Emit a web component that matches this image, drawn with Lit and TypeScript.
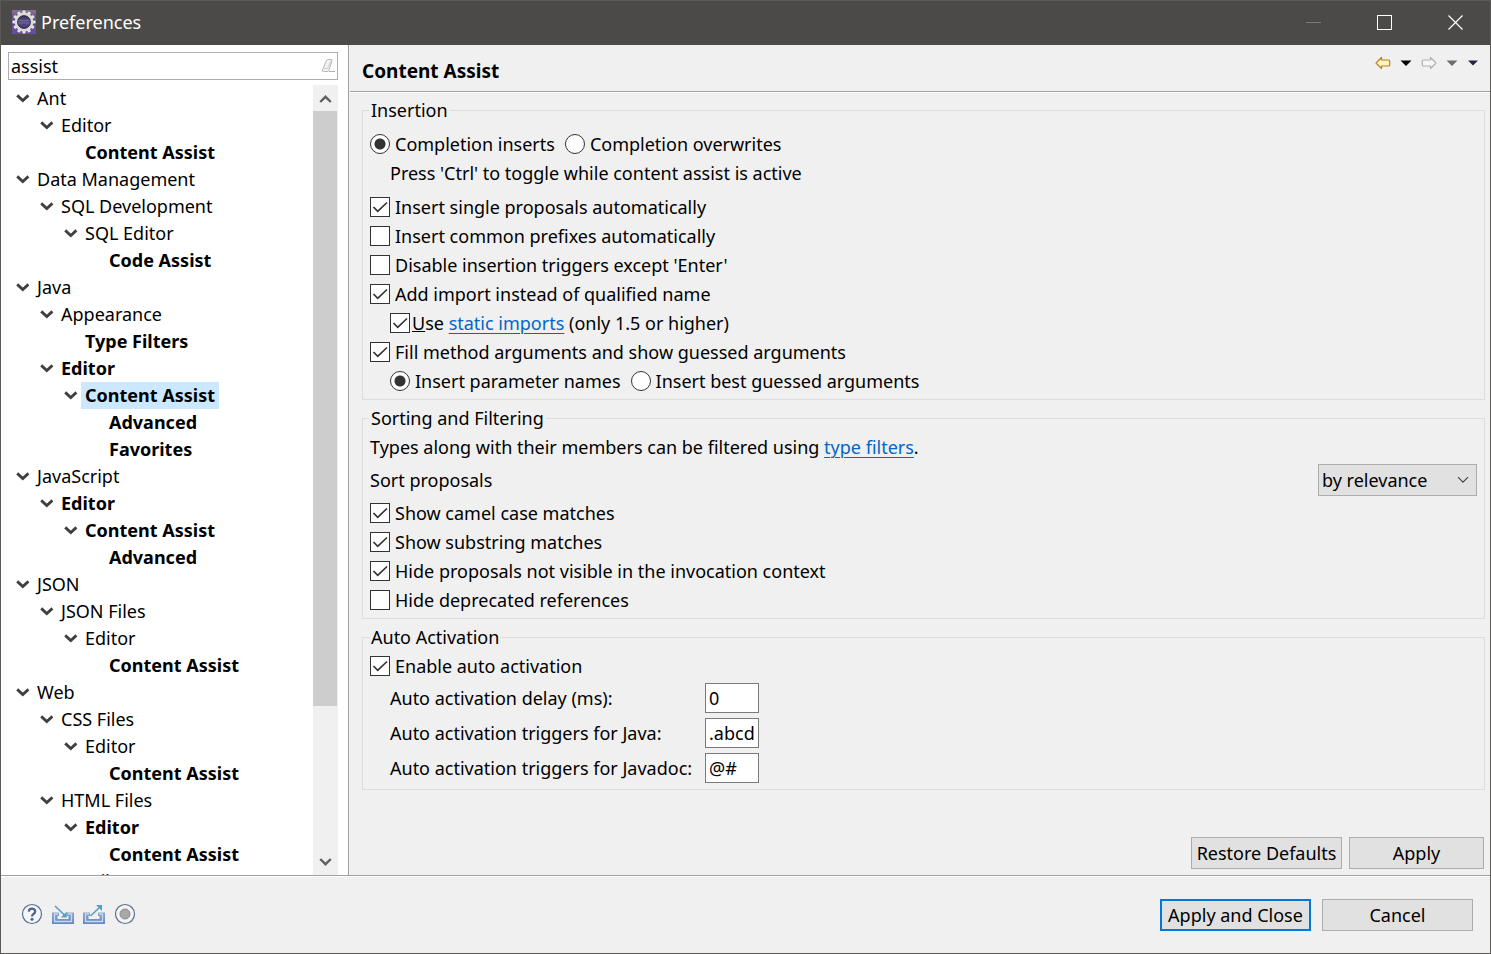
import { LitElement, html, css, svg, nothing } from "lit";
import { customElement, property } from "lit/decorators.js";

interface TreeNode {
  label: string;
  bold?: boolean;
  selected?: boolean;
  children?: TreeNode[];
}

const page = (label: string, children?: TreeNode[]): TreeNode => ({ label, bold: true, children });
const group = (label: string, children?: TreeNode[]): TreeNode => ({ label, children });

const TREE: TreeNode[] = [
  group("Ant", [group("Editor", [page("Content Assist")])]),
  group("Data Management", [group("SQL Development", [group("SQL Editor", [page("Code Assist")])])]),
  group("Java", [
    group("Appearance", [page("Type Filters")]),
    page("Editor", [{ ...page("Content Assist", [page("Advanced"), page("Favorites")]), selected: true }]),
  ]),
  group("JavaScript", [page("Editor", [page("Content Assist", [page("Advanced")])])]),
  group("JSON", [group("JSON Files", [group("Editor", [page("Content Assist")])])]),
  group("Web", [
    group("CSS Files", [group("Editor", [page("Content Assist")])]),
    group("HTML Files", [page("Editor", [page("Content Assist")])]),
    group("JSP Files", []),
  ]),
];

const shared = css`
  * {
    box-sizing: border-box;
  }
  button,
  input,
  select {
    font: inherit;
    color: inherit;
    margin: 0;
  }
  svg {
    display: block;
    flex: none;
  }
  .icon-button {
    display: flex;
    align-items: center;
    justify-content: center;
    padding: 0;
    border: 0;
    background: none;
  }
`;

@customElement("title-bar")
export class TitleBar extends LitElement {
  static styles = [
    shared,
    css`
      :host {
        display: flex;
        align-items: center;
        height: 44px;
        background: #4c4a48;
        color: #fff;
        padding: 0 0 2px 11px;
      }
      h1 {
        flex: 1;
        margin: 0 0 0 5px;
        font-size: 18px;
        font-weight: 400;
        line-height: 26px;
      }
      .icon-button {
        width: 71px;
        height: 42px;
      }
    `,
  ];

  render() {
    const teeth = Array.from({ length: 12 }, (_, i) => i * 30);
    return html`
      <svg width="24" height="24" viewBox="0 0 24 24" aria-hidden="true">
        <defs>
          <linearGradient id="plate" x1="0" y1="0" x2="0" y2="1">
            <stop offset="0" stop-color="#857191" />
            <stop offset="0.5" stop-color="#5b4a86" />
            <stop offset="1" stop-color="#6a4da6" />
          </linearGradient>
          <linearGradient id="globe" x1="0" y1="0" x2="0" y2="1">
            <stop offset="0" stop-color="#2e2a3e" />
            <stop offset="0.5" stop-color="#5c528c" />
            <stop offset="1" stop-color="#3c2f6c" />
          </linearGradient>
        </defs>
        <rect width="24" height="24" fill="url(#plate)" />
        ${teeth.map(
          (a) => svg`<rect x="10.4" y="0.4" width="3.2" height="4" rx="1" fill="#e6e4e2" transform="rotate(${a} 12 12)" />`
        )}
        <circle cx="12" cy="12" r="8" fill="url(#globe)" stroke="#dcdad8" stroke-width="2.8" />
        <path d="M6 10.500h12M6 13h12" stroke="#7067a0" stroke-width="1" />
        <circle cx="12" cy="12" r="6.400" fill="none" stroke="#282436" stroke-width="0.800" />
      </svg>
      <h1>Preferences</h1>
      <button class="icon-button" aria-label="Minimize" disabled>
        <svg width="16" height="16"><path d="M1 8.500h15" stroke="#7c7a78" /></svg>
      </button>
      <button class="icon-button" aria-label="Maximize">
        <svg width="16" height="16"><rect x="1.500" y="1.500" width="14" height="14" fill="none" stroke="#fff" /></svg>
      </button>
      <button class="icon-button" aria-label="Close">
        <svg width="16" height="16"><path d="M1.500 1.500l14 14M15.500 1.500l-14 14" stroke="#fff" stroke-width="1.200" /></svg>
      </button>
    `;
  }
}

@customElement("page-tree")
export class PageTree extends LitElement {
  static styles = [
    shared,
    css`
      :host {
        display: flex;
        flex-direction: column;
        gap: 5px;
        min-height: 0;
        padding: 7px 10px 0 7px;
        background: #fff;
        border-right: 1px solid #a0a0a0;
      }
      .filter {
        display: flex;
        align-items: center;
        flex: none;
        height: 28px;
        border: 1px solid #abadb3;
        padding: 0 2px;
      }
      .filter input {
        flex: 1;
        min-width: 0;
        height: 26px;
        padding: 0;
        border: 0;
        outline: 0;
        background: none;
      }
      .body {
        display: flex;
        flex: 1;
        min-height: 0;
      }
      .list {
        flex: 1;
        overflow: hidden;
        padding-left: 8px;
      }
      ul {
        list-style: none;
        margin: 0;
        padding: 0;
      }
      ul ul {
        padding-left: 24px;
      }
      .row {
        display: flex;
        align-items: center;
        height: 27px;
      }
      .twisty {
        width: 14px;
        height: 27px;
        margin-right: 3px;
      }
      .name {
        line-height: 27px;
        padding: 0 4px;
        white-space: nowrap;
      }
      .bold {
        font-weight: 700;
      }
      .selected {
        background: #cce8ff;
      }
      .scroll {
        display: flex;
        flex-direction: column;
        width: 25px;
        background: #f0f0f0;
      }
      .scroll .icon-button {
        height: 26px;
      }
      .track {
        flex: 1;
        padding-right: 1px;
      }
      .thumb {
        height: 80.6%;
        background: #cdcdcd;
      }
    `,
  ];

  private node(n: TreeNode): unknown {
    return html`
      <li>
        <div class="row">
          <span class="twisty icon-button">
            ${n.children
              ? html`<svg width="14" height="9" viewBox="0 0 14 9">
                  <path d="M1.200 1.400L6.800 6.600l5.600-5.200" fill="none" stroke="#404040" stroke-width="2.800" />
                </svg>`
              : nothing}
          </span>
          <span class="name ${n.bold ? "bold" : ""} ${n.selected ? "selected" : ""}">${n.label}</span>
        </div>
        ${n.children ? html`<ul>${n.children.map((c) => this.node(c))}</ul>` : nothing}
      </li>
    `;
  }

  render() {
    return html`
      <div class="filter">
        <input type="text" aria-label="Filter text" value="assist" />
        <button class="icon-button" aria-label="Clear">
          <svg width="14" height="14" viewBox="0 0 14 14">
            <path d="M5.500 1.500q0.500-1 1.500-1h3q1.500 0 1 1.500L8 11q-0.500 1.500-2 1.500H2.500Q1 12.500 1.400 11z" fill="#f2f2f2" stroke="#b8b8b8" />
            <path d="M2 9.500h4.500L10 1.500" fill="none" stroke="#d0d0d0" />
            <path d="M8 12.500h6" stroke="#b0b0b0" />
          </svg>
        </button>
      </div>
      <div class="body">
        <div class="list">
          <ul>${TREE.map((n) => this.node(n))}</ul>
        </div>
        <div class="scroll">
          <button class="icon-button" aria-label="Scroll up">
            <svg width="14" height="9" viewBox="0 0 14 9">
              <path d="M1.200 8L6.500 2.800l5.300 5.200" fill="none" stroke="#606060" stroke-width="2.400" />
            </svg>
          </button>
          <div class="track"><div class="thumb"></div></div>
          <button class="icon-button" aria-label="Scroll down">
            <svg width="14" height="9" viewBox="0 0 14 9">
              <path d="M1.200 1L6.500 6.200L11.800 1" fill="none" stroke="#606060" stroke-width="2.400" />
            </svg>
          </button>
        </div>
      </div>
    `;
  }
}

@customElement("choice-field")
export class ChoiceField extends LitElement {
  @property() type = "checkbox";
  @property() label = "";
  @property({ type: Boolean }) checked = false;

  static styles = [
    shared,
    css`
      :host {
        display: flex;
      }
      label {
        display: flex;
        align-items: center;
        gap: 5px;
        height: 29px;
        padding-bottom: 1px;
        white-space: nowrap;
      }
      :host(.snug) label {
        gap: 2px;
      }
      input {
        appearance: none;
        flex: none;
        width: 20px;
        height: 20px;
        border: 1px solid #333;
        background: #fff;
      }
      input[type="checkbox"]:checked {
        background: #fff
          url('data:image/svg+xml,<svg xmlns="http://www.w3.org/2000/svg" width="18" height="18"><path d="M2.500 9l4.200 4.300 9.300-8.800" fill="none" stroke="%23333" stroke-width="1.700"/></svg>')
          center no-repeat;
      }
      input[type="radio"] {
        border-radius: 50%;
      }
      input[type="radio"]:checked {
        background: radial-gradient(circle, #333 0 4px, #333 5px, #fff 6px);
      }
    `,
  ];

  render() {
    return html`<label><input type=${this.type} .checked=${this.checked} /><span>${this.label}<slot></slot></span></label>`;
  }
}

@customElement("app-root")
export class AppRoot extends LitElement {
  static styles = [
    shared,
    css`
      :host {
        display: flex;
        flex-direction: column;
        box-sizing: border-box;
        height: 100vh;
        border: 1px solid #5a5957;
        background: #f0f0f0;
        color: #000;
        font-family: "Noto Sans", "Open Sans", sans-serif;
        font-size: 18px;
        line-height: 26px;
      }
      .main {
        display: grid;
        grid-template-columns: 348px 1fr;
        grid-template-rows: minmax(0, 1fr);
        flex: 1;
        min-height: 0;
      }
      .page {
        display: flex;
        flex-direction: column;
        min-width: 0;
        padding-left: 1px;
      }
      .head {
        display: flex;
        align-items: flex-start;
        justify-content: space-between;
        flex: none;
        height: 48px;
        padding: 0 11px 0 12px;
        border-bottom: 1px solid #fff;
        box-shadow: inset 0 -1px #a0a0a0;
      }
      .head h2 {
        margin: 13px 0 0;
        font-size: 19px;
        line-height: 26px;
      }
      .nav {
        display: flex;
        align-items: center;
        gap: 9px;
        margin-top: 10px;
      }
      .groups {
        display: flex;
        flex-direction: column;
        gap: 5px;
        flex: 1;
        padding: 4px 5px 0 12px;
      }
      fieldset {
        min-width: 0;
        margin: 0;
        padding: 2px 7px 3px;
        border: 1px solid #dcdcdc;
      }
      .roomy {
        padding-top: 7px;
      }
      legend {
        margin-left: -1px;
        padding: 0 2px;
        line-height: 26px;
      }
      .choices {
        display: flex;
        gap: 10px;
      }
      .line {
        margin: 0;
        line-height: 29px;
      }
      .hint {
        margin-bottom: 5px;
      }
      .indent {
        margin-left: 20px;
      }
      a {
        color: #0066cc;
        text-underline-offset: 3px;
        text-decoration-thickness: 1px;
      }
      .sort {
        display: flex;
        align-items: center;
        justify-content: space-between;
        margin: 2px 0 3px;
      }
      select {
        appearance: none;
        width: 159px;
        height: 32px;
        padding: 0 3px;
        border: 1px solid #adadad;
        border-radius: 0;
        background: #e1e1e1
          url('data:image/svg+xml,<svg xmlns="http://www.w3.org/2000/svg" width="12" height="8"><path d="M1 1.200l5 5 5-5" fill="none" stroke="%23444" stroke-width="1.200"/></svg>')
          right 7px center no-repeat;
      }
      .fields {
        display: grid;
        grid-template-columns: 310px 54px;
        gap: 5px;
        align-items: center;
        margin: 2px 0 3px 20px;
      }
      .fields label {
        white-space: nowrap;
      }
      .fields input {
        width: 54px;
        height: 30px;
        padding: 0 3px;
        border: 1px solid #7a7a7a;
        background: #fff;
      }
      .buttons {
        display: flex;
        justify-content: flex-end;
        gap: 7px;
        padding: 0 6px 6px;
      }
      .push {
        width: 151px;
        height: 32px;
        padding: 0;
        border: 1px solid #adadad;
        background: #e1e1e1;
        white-space: nowrap;
      }
      .apply {
        width: 135px;
      }
      .default {
        border: 2px solid #0078d7;
      }
      .foot {
        display: flex;
        align-items: center;
        gap: 11px;
        flex: none;
        height: 78px;
        padding: 0 17px 0 20px;
        border-top: 1px solid #a0a0a0;
        box-shadow: inset 0 1px #fff;
      }
      .tools {
        display: flex;
        gap: 9px;
        margin-right: auto;
        padding-bottom: 2px;
      }
    `,
  ];

  private caret(color: string, width: number) {
    return html`<svg width="12" height="8" viewBox="0 0 12 8">
      <path d=${`M${6 - width / 2} 1.500h${width}L6 ${1.5 + width / 2}z`} fill=${color} />
    </svg>`;
  }

  private tray(id: string, arrow: unknown) {
    return html`<svg width="22" height="22" viewBox="0 0 22 22">
      <defs>
        <linearGradient id=${id} x1="0" y1="0" x2="0" y2="1">
          <stop offset="0" stop-color="#8fa6cc" />
          <stop offset="1" stop-color="#5f88c2" />
        </linearGradient>
      </defs>
      <path d="M0 9.500h7v3.500H5.500v3h11v-3H15V9.500h7V21H0z" fill="url(#${id})" />
      <path d="M6 11H2.500v7.500h17V11H16" fill="none" stroke="#c9d7ec" stroke-width="1.300" />
      ${arrow}
    </svg>`;
  }

  render() {
    return html`
      <title-bar></title-bar>
      <div class="main">
        <page-tree></page-tree>
        <section class="page">
          <header class="head">
            <h2>Content Assist</h2>
            <nav class="nav">
              <button class="icon-button" aria-label="Back">
                <svg width="16" height="16" viewBox="0 0 16 16">
                  <path d="M1 8L6.500 2.500V5h7q1.200 0 1.200 1v4q0 1-1.200 1h-7v2.500z" fill="#fff5c4" stroke="#bd8111" stroke-width="1.200" stroke-linejoin="round" />
                </svg>
              </button>
              <button class="icon-button" aria-label="Back history">${this.caret("#000", 11)}</button>
              <button class="icon-button" aria-label="Forward" disabled>
                <svg width="16" height="16" viewBox="0 0 16 16">
                  <path d="M15 8L9.500 2.500V5h-7Q1.300 5 1.300 6v4q0 1 1.200 1h7v2.500z" fill="#f6f6f6" stroke="#b0b0b0" stroke-width="1.200" stroke-linejoin="round" />
                </svg>
              </button>
              <button class="icon-button" aria-label="Forward history" disabled>${this.caret("#6d6d6d", 11)}</button>
              <button class="icon-button" aria-label="View menu">${this.caret("#2c2140", 10)}</button>
            </nav>
          </header>
          <div class="groups">
            <fieldset class="roomy">
              <legend>Insertion</legend>
              <div class="choices">
                <choice-field type="radio" label="Completion inserts" checked></choice-field>
                <choice-field type="radio" label="Completion overwrites"></choice-field>
              </div>
              <p class="line hint indent">Press 'Ctrl' to toggle while content assist is active</p>
              <choice-field label="Insert single proposals automatically" checked></choice-field>
              <choice-field label="Insert common prefixes automatically"></choice-field>
              <choice-field label="Disable insertion triggers except 'Enter'"></choice-field>
              <choice-field label="Add import instead of qualified name" checked></choice-field>
              <choice-field class="indent snug" checked><u>U</u>se <a href="#static">static imports</a> (only 1.5 or higher)</choice-field>
              <choice-field label="Fill method arguments and show guessed arguments" checked></choice-field>
              <div class="choices indent">
                <choice-field type="radio" label="Insert parameter names" checked></choice-field>
                <choice-field type="radio" label="Insert best guessed arguments"></choice-field>
              </div>
            </fieldset>
            <fieldset>
              <legend>Sorting and Filtering</legend>
              <p class="line">Types along with their members can be filtered using <a href="#filters">type filters</a>.</p>
              <div class="sort">
                <label for="sort">Sort proposals</label>
                <select id="sort"><option>by relevance</option><option>alphabetically</option></select>
              </div>
              <choice-field label="Show camel case matches" checked></choice-field>
              <choice-field label="Show substring matches" checked></choice-field>
              <choice-field label="Hide proposals not visible in the invocation context" checked></choice-field>
              <choice-field label="Hide deprecated references"></choice-field>
            </fieldset>
            <fieldset>
              <legend>Auto Activation</legend>
              <choice-field label="Enable auto activation" checked></choice-field>
              <div class="fields">
                <label for="delay">Auto activation delay (ms):</label>
                <input id="delay" type="text" value="0" />
                <label for="java">Auto activation triggers for Java:</label>
                <input id="java" type="text" value=".abcd" />
                <label for="javadoc">Auto activation triggers for Javadoc:</label>
                <input id="javadoc" type="text" value="@#" />
              </div>
            </fieldset>
          </div>
          <div class="buttons">
            <button class="push">Restore Defaults</button>
            <button class="push apply">Apply</button>
          </div>
        </section>
      </div>
      <footer class="foot">
        <div class="tools">
          <button class="icon-button" aria-label="Help">
            <svg width="22" height="22" viewBox="0 0 22 22">
              <circle cx="11" cy="11" r="9.500" fill="#f4f6fa" stroke="#5d6f92" stroke-width="1.200" />
              <path d="M7.800 8.600Q8 5.600 11 5.600t3.200 2.800q0 1.500-1.700 2.600-1.500 1-1.500 2.400" fill="none" stroke="#4d6390" stroke-width="2.200" />
              <circle cx="11" cy="16.200" r="1.500" fill="#4d6390" />
            </svg>
          </button>
          <button class="icon-button" aria-label="Import">
            ${this.tray("tray-in", svg`<path d="M3 3l10 9.500" stroke="#5d9cc4" stroke-width="1.600" /><path d="M14.800 8.500v6h-6z" fill="#5d9cc4" />`)}
          </button>
          <button class="icon-button" aria-label="Export">
            ${this.tray("tray-out", svg`<path d="M7.500 13L17 4" stroke="#5d9cc4" stroke-width="1.600" /><path d="M13 2h6v6z" fill="#5d9cc4" />`)}
          </button>
          <button class="icon-button" aria-label="Record">
            <svg width="22" height="22" viewBox="0 0 22 22">
              <circle cx="11" cy="11" r="9.500" fill="#f4f4f4" stroke="#5d6f92" stroke-width="1.200" />
              <circle cx="11" cy="11" r="5" fill="#a8a8a8" stroke="#8a8a8a" />
            </svg>
          </button>
        </div>
        <button class="push default">Apply and Close</button>
        <button class="push">Cancel</button>
      </footer>
    `;
  }
}
